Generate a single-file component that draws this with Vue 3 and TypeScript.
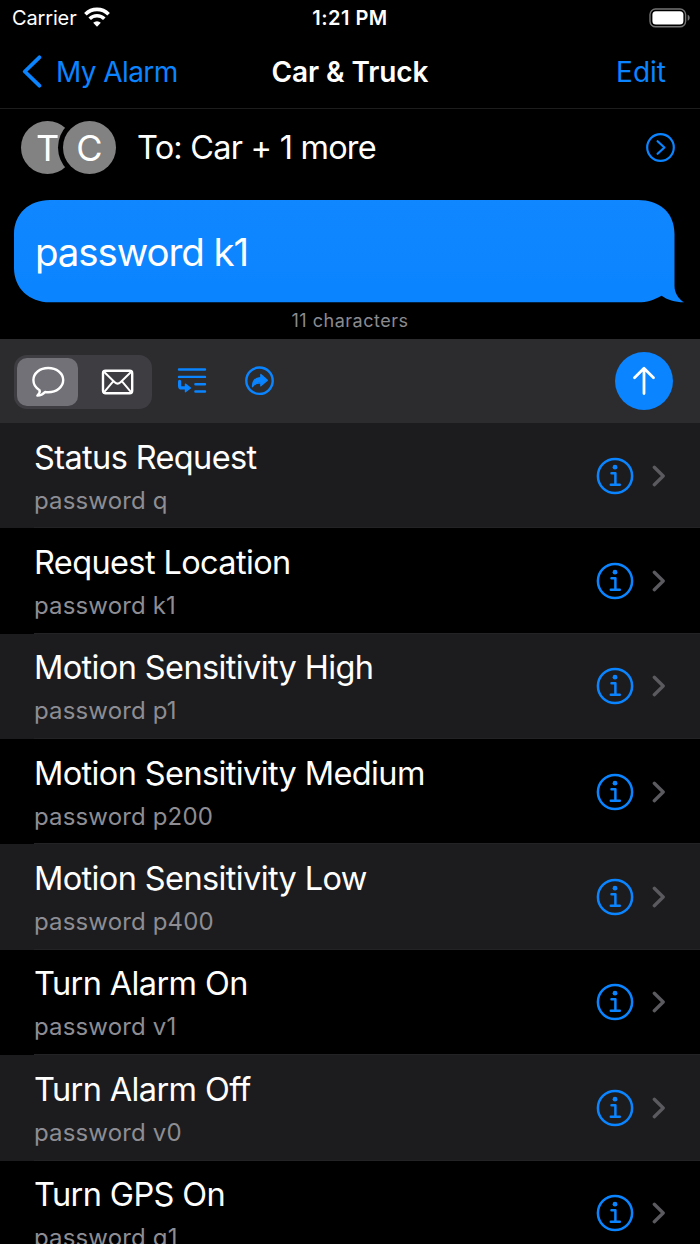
<script setup lang="ts">
interface Command {
  title: string
  message: string
}

const commands: Command[] = [
  { title: 'Status Request', message: 'password q' },
  { title: 'Request Location', message: 'password k1' },
  { title: 'Motion Sensitivity High', message: 'password p1' },
  { title: 'Motion Sensitivity Medium', message: 'password p200' },
  { title: 'Motion Sensitivity Low', message: 'password p400' },
  { title: 'Turn Alarm On', message: 'password v1' },
  { title: 'Turn Alarm Off', message: 'password v0' },
  { title: 'Turn GPS On', message: 'password g1' },
]
</script>

<template>
  <div class="screen">
    <header class="status">
      <div class="carrier">
        <span>Carrier</span>
        <svg class="wifi" width="26" height="20" viewBox="0 0 26 20">
          <path d="M1.4 7.2a16.4 16.4 0 0 1 23.2 0" />
          <path d="M5.7 11.8a10.4 10.4 0 0 1 14.6 0" />
          <path class="solid" d="M13 19.7 9.2 15.8a5.5 5.5 0 0 1 7.6 0z" />
        </svg>
      </div>
      <span class="time">1:21 PM</span>
      <svg class="battery" width="42" height="20" viewBox="0 0 42 20">
        <rect class="case" x="1" y="1" width="35.6" height="17.8" rx="5.6" />
        <rect class="charge" x="3.4" y="3.2" width="31" height="13.2" rx="3.5" />
        <path class="nub" d="M38.7 6.8c2.6 1 2.6 5 0 6z" />
      </svg>
    </header>

    <nav class="nav">
      <a class="back">
        <svg width="20" height="34" viewBox="0 0 20 34"><path d="M17.4 2.3 2.8 16.5l14.6 14.2" /></svg>
        <span>My Alarm</span>
      </a>
      <h1>Car &amp; Truck</h1>
      <a class="edit">Edit</a>
    </nav>

    <section class="recipients">
      <div class="avatars">
        <span class="avatar">T</span>
        <span class="avatar front">C</span>
      </div>
      <span class="to">To: Car + 1 more</span>
      <svg class="more" width="30" height="30" viewBox="0 0 30 30">
        <circle cx="15.5" cy="14.5" r="13.3" />
        <path d="m12.6 8.2 6.8 6.3-6.8 6.3" />
      </svg>
    </section>

    <section class="compose">
      <div class="bubble">
        <svg class="bubble-shape" width="671" height="103" viewBox="0 0 671 103">
          <defs>
            <linearGradient id="bubbleFill" x1="0" y1="0" x2="0" y2="1">
              <stop offset="0" stop-color="#1087ff" />
              <stop offset="1" stop-color="#0a84ff" />
            </linearGradient>
          </defs>
          <path
            fill="url(#bubbleFill)"
            d="M36 0H624C645 0 660.5 12 660.5 34V86C660.5 93 664.5 99 670 102.3C661 102.3 653 99.5 647.5 95.7C640 100 633 102.3 624 102.3H36C15 102.3 0 88 0 68V34C0 14 15 0 36 0Z"
          />
        </svg>
        <span class="draft">password k1</span>
      </div>
      <span class="count">11 characters</span>
    </section>

    <section class="toolbar">
      <div class="segments">
        <button class="segment selected" aria-label="Message">
          <svg width="34" height="32" viewBox="0 0 34 32">
            <path d="M17.2 2C8.8 2 2.4 7.2 2.4 14.1C2.4 18.3 4.7 22 8.6 24.2C9.2 26 8.1 28 6.4 29.6C9.7 29.5 12.3 28 14 26C15 26.2 16.1 26.3 17.2 26.3C25.6 26.3 32.2 21 32.2 14.1C32.2 7.2 25.6 2 17.2 2Z" />
          </svg>
        </button>
        <button class="segment" aria-label="Mail">
          <svg width="34" height="28" viewBox="0 0 34 28">
            <rect x="2" y="2.7" width="29.2" height="22.6" rx="2.5" />
            <path class="thin" d="m2.7 3.5 11 10.8c1.8 1.7 4 1.7 5.800 0L30.500 3.500M2.700 24.600l9.700-11.400M30.500 24.600l-9.700-11.400" />
          </svg>
        </button>
      </div>
      <svg class="tool insert" width="30" height="28" viewBox="0 0 30 28">
        <path class="line" d="M2 2.5H28M2 9.900H28M18.400 17.200H28M18.400 24.500H28" />
        <path class="elbow" d="M2.600 14.400v4.500q0 2 2 2h4" />
        <path class="head" d="M8.400 17.100 13.500 21 8.400 24.800z" />
      </svg>
      <svg class="tool share" width="30" height="30" viewBox="0 0 30 30">
        <circle cx="14.5" cy="14.7" r="13.2" />
        <path class="head" d="M15.8 8.4 22.4 14.2 15.8 19.9V16.8C11.500 16.800 9.200 18 7.500 20.800C7.100 15.400 9.800 11.800 15.800 11.600Z" />
      </svg>
      <button class="send" aria-label="Send">
        <svg width="26" height="32" viewBox="0 0 26 32"><path d="M13 28.5V3.3M3.500 12.800 13 3.300l9.500 9.500" /></svg>
      </button>
    </section>

    <ul class="commands">
      <li v-for="command in commands" :key="command.title" class="command">
        <div class="copy">
          <span class="title">{{ command.title }}</span>
          <span class="message">{{ command.message }}</span>
        </div>
        <svg class="info" width="38" height="38" viewBox="0 0 38 38">
          <circle cx="19" cy="19" r="17.1" />
          <circle class="dot" cx="19" cy="10.2" r="2.4" />
          <path d="M15.500 16.300h3.900v11.300M14.800 27.700h9" />
        </svg>
        <svg class="chevron" width="14" height="22" viewBox="0 0 14 22"><path d="m2.300 2.300 8.900 8.700-8.900 8.700" /></svg>
      </li>
    </ul>
  </div>
</template>

<style>
html,
body {
  margin: 0;
  background: #000;
}
</style>

<style scoped>
.screen {
  width: 700px;
  height: 1244px;
  overflow: hidden;
  display: flex;
  flex-direction: column;
  background: #000;
  color: #fff;
  font-family: Inter, Roboto, sans-serif;
  font-feature-settings: "calt" 0;
}
svg {
  display: block;
  fill: none;
  stroke-linecap: round;
  stroke-linejoin: round;
  flex: none;
}
button {
  border: 0;
  margin: 0;
  padding: 0;
  background: none;
  display: flex;
  align-items: center;
  justify-content: center;
  box-sizing: border-box;
  flex: none;
}
.status {
  height: 35px;
  flex: none;
  display: grid;
  grid-template-columns: 1fr auto 1fr;
  align-items: center;
  padding: 0 12px;
  font-size: 20px;
  white-space: nowrap;
}
.carrier {
  display: flex;
  align-items: center;
  gap: 8px;
  letter-spacing: -0.15px;
}
.wifi {
  stroke: #fff;
  stroke-width: 3.6;
  stroke-linecap: butt;
  margin: -2px 0 0 -1px;
}
.wifi .solid {
  fill: #fff;
  stroke: none;
}
.time {
  font-weight: 600;
  letter-spacing: 0.5px;
}
.battery {
  justify-self: end;
  margin-right: -3px;
}
.case {
  stroke: #747474;
  stroke-width: 1.4;
}
.charge {
  fill: #fff;
}
.nub {
  fill: #747474;
}
.nav {
  height: 73px;
  flex: none;
  display: grid;
  grid-template-columns: 1fr auto 1fr;
  align-items: center;
  padding: 0 22px;
  border-bottom: 1px solid #1d1d1e;
  font-size: 28px;
}
.back {
  display: flex;
  align-items: center;
  gap: 14px;
  color: #0a84ff;
  letter-spacing: -0.6px;
}
.back svg {
  stroke: #0a84ff;
  stroke-width: 3.8;
}
h1 {
  margin: 0;
  font-size: 28px;
  font-weight: 600;
  letter-spacing: -0.1px;
}
.edit {
  justify-self: end;
  margin-right: 12px;
  color: #0a84ff;
}
.recipients {
  height: 77px;
  flex: none;
  display: flex;
  align-items: center;
  padding: 0 25px 0 21px;
}
.avatars {
  display: flex;
  margin-right: 21px;
}
.avatar {
  width: 53px;
  height: 53px;
  border-radius: 50%;
  background: #828282;
  font-size: 36px;
  line-height: 54px;
  text-align: center;
}
.front {
  margin-left: -11px;
  box-shadow: 0 0 0 5px #000;
}
.to {
  font-size: 32.5px;
  letter-spacing: -0.78px;
  flex: 1;
}
.more {
  stroke: #0a84ff;
  stroke-width: 2.2;
}
.compose {
  height: 153px;
  flex: none;
  display: flex;
  flex-direction: column;
  align-items: center;
}
.bubble {
  position: relative;
  width: 671px;
  height: 103px;
  margin: 14px 1px 0 0;
  display: flex;
  align-items: center;
}
.bubble-shape {
  position: absolute;
  inset: 0;
}
.draft {
  position: relative;
  padding-left: 21px;
  font-size: 38.5px;
  letter-spacing: -1.1px;
}
.count {
  font-size: 18px;
  line-height: 35px;
  letter-spacing: 0.5px;
  color: #8a8a8f;
}
.toolbar {
  height: 84px;
  flex: none;
  display: flex;
  align-items: center;
  background: #2c2c2e;
  padding: 0 27px 0 14px;
}
.segments {
  display: flex;
  width: 132px;
  height: 48px;
  padding: 3px;
  border-radius: 13px;
  background: #3e3d42;
  margin: 1px 25px 0 0;
}
.segment {
  width: 61px;
  height: 48px;
  border-radius: 10px;
}
.segment + .segment {
  width: 71px;
  padding-left: 8px;
}
.segment svg {
  stroke: #fff;
  stroke-width: 2.4;
}
.segment .thin {
  stroke-width: 2;
}
.selected {
  background: #727177;
}
.tool {
  stroke: #0a84ff;
  stroke-width: 2.4;
}
.tool .head {
  fill: #0a84ff;
  stroke-width: 1.2;
}
.tool .elbow {
  stroke-width: 3.2;
}
.share {
  margin-left: 38px;
}
.send {
  width: 58px;
  height: 58px;
  border-radius: 50%;
  background: #0a84ff;
  margin-left: auto;
}
.send svg {
  stroke: #fff;
  stroke-width: 2.8;
}
.commands {
  list-style: none;
  margin: 0;
  padding: 0;
}
.command {
  height: 105.36px;
  display: flex;
  align-items: center;
  padding: 0 34px;
  background-image: linear-gradient(#232325, #232325);
  background-size: calc(100% - 34px) 1px;
  background-position: right bottom;
  background-repeat: no-repeat;
}
.command:nth-child(odd) {
  background-color: #1c1c1e;
}
.copy {
  flex: 1;
  align-self: flex-start;
  padding-top: 13.6px;
  display: flex;
  flex-direction: column;
  white-space: nowrap;
}
.title {
  font-size: 32.5px;
  line-height: 42px;
  letter-spacing: -0.62px;
}
.message {
  font-size: 24px;
  line-height: 44px;
  letter-spacing: 0.15px;
  color: #8d8d93;
}
.info {
  stroke: #0a84ff;
  stroke-width: 2.5;
  margin-right: 18px;
}
.info .dot {
  fill: #0a84ff;
  stroke: none;
}
.chevron {
  stroke: #5a5a5f;
  stroke-width: 3.3;
}
</style>
